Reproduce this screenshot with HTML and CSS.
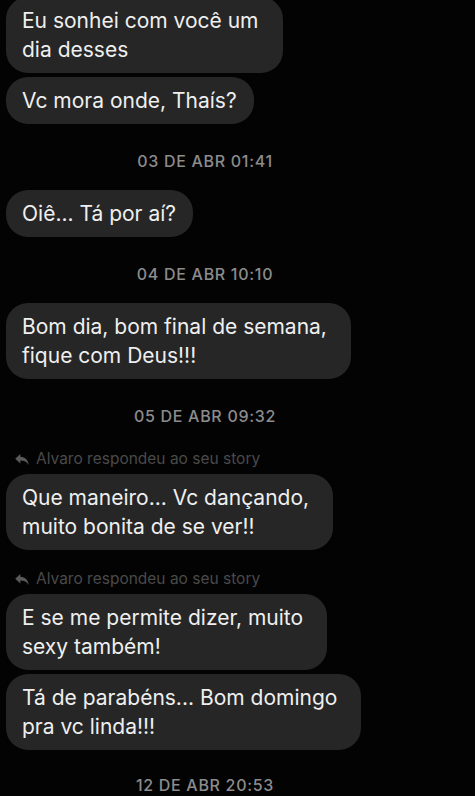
FILE: index.html
```html
<!DOCTYPE html>
<html lang="pt-BR">
<head>
  <meta charset="UTF-8" />
  <meta name="viewport" content="width=device-width, initial-scale=1.0"/>
  <title>Mensagens</title>
  <link rel="stylesheet" href="styles.css">
</head>
<body>
  <div class="chat">
    <div class="bubble wrap">Eu sonhei com você um<br>dia desses</div>
    <div class="bubble">Vc mora onde, Thaís?</div>

    <div class="stamp">03 DE ABR 01:41</div>
    <div class="bubble">Oiê... Tá por aí?</div>

    <div class="stamp">04 DE ABR 10:10</div>
    <div class="bubble wrap">Bom dia, bom final de semana,<br>fique com Deus!!!</div>

    <div class="stamp">05 DE ABR 09:32</div>
    <div class="reply">
      <svg class="reply-icon" viewBox="0 0 24 20"><path d="M9.5 1.5 L1.5 8.8 L9.5 16 V11.6 C15 11.6 19 13.2 22.5 18.5 C21.5 11.5 17.5 6.2 9.5 5.8 Z"/></svg>
      Alvaro respondeu ao seu story
    </div>
    <div class="bubble wrap">Que maneiro... Vc dançando,<br>muito bonita de se ver!!</div>

    <div class="reply">
      <svg class="reply-icon" viewBox="0 0 24 20"><path d="M9.5 1.5 L1.5 8.8 L9.5 16 V11.6 C15 11.6 19 13.2 22.5 18.5 C21.5 11.5 17.5 6.2 9.5 5.8 Z"/></svg>
      Alvaro respondeu ao seu story
    </div>
    <div class="bubble wrap">E se me permite dizer, muito<br>sexy também!</div>
    <div class="bubble wrap">Tá de parabéns... Bom domingo<br>pra vc linda!!!</div>

    <div class="stamp">12 DE ABR 20:53</div>
  </div>
</body>
</html>
```

FILE: styles.css
```css
html, body {
  margin: 0;
  padding: 0;
  background-color: #030303;
  font-family: 'Inter', 'Liberation Sans', sans-serif;
  color: #efefef;
  overflow: hidden;
}

.chat {
  padding: 0 6px;
}

.bubble {
  width: fit-content;
  background-color: #262626;
  border-radius: 22px;
  padding: 9px 17px 9px 16px;
  font-size: 21px;
  line-height: 29px;
}

.bubble.wrap {
  padding-right: 24px;
}

.chat > .bubble:first-child {
  margin-top: -3px;
}

.bubble + .bubble {
  margin-top: 4px;
}

.stamp {
  width: 398px;
  text-align: center;
  margin: 27px 0 19px;
  font-size: 16px;
  font-weight: 500;
  line-height: 20px;
  letter-spacing: 0.7px;
  color: #8c8c8c;
}

/* last one sits right on the bottom edge */
.chat > .stamp:last-child {
  margin: 26px 0 0;
  line-height: 18px;
}

.reply {
  display: flex;
  align-items: center;
  gap: 6px;
  margin: 20px 0 6px 8px;
  font-size: 15.5px;
  line-height: 18px;
  color: #4a4a4a;
}

.stamp + .reply {
  margin-top: 24px;
}

.reply-icon {
  width: 16px;
  height: 13px;
  fill: #5a5a5a;
}
```
